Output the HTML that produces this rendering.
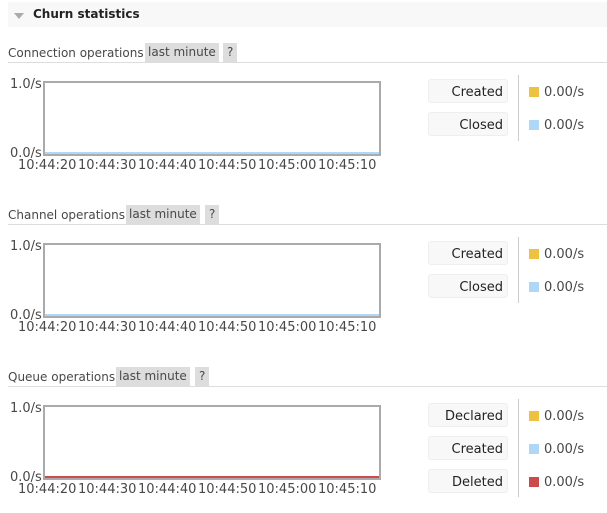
<!DOCTYPE html>
<html><head><meta charset="utf-8">
<style>
*{margin:0;padding:0;box-sizing:border-box}
body{width:607px;height:513px;background:#fff;font-family:"DejaVu Sans","Liberation Sans",sans-serif;font-size:12px;color:#484848;position:relative;overflow:hidden}
.a{position:absolute;white-space:nowrap}
.hdr{left:8px;top:2px;width:599px;height:25px;background:#f8f8f8}
.tri{left:14px;top:13px;width:0;height:0;border-left:5px solid transparent;border-right:5px solid transparent;border-top:6px solid #aaa}
.ttl{left:33px;top:7px;font-weight:bold;font-size:12px;color:#222}
.sec{position:absolute;left:0;width:607px;height:160px}
.lbl{left:8px;top:2px;line-height:18px;color:#484848}
.tag{top:1px;height:19px;line-height:19px;background:#ddd;padding:0 3px;color:#484848}
.hr{left:8px;top:20px;width:599px;height:1px;background:#ddd}
.chart{left:43px;top:39px;width:338px;height:75px;border:2px solid #aaa;background:#fff}
.ser{position:absolute;left:0;bottom:0;width:100%;height:2px}
.y{left:10px;font-size:13px}
.x{top:116px;font-size:13px;width:60px;text-align:left}
.btn{left:428px;width:80px;height:24px;background:#f8f8f8;border:1px solid #eee;border-radius:3px;text-align:right;padding-right:4px;line-height:25px;color:#222;font-size:13px}
.vl{left:518px;width:1px;background:#ccc}
.sw{left:529px;width:10px;height:10px}
.val{left:544px;line-height:14px;color:#484848;font-size:13px}
</style></head><body>
<div class="a hdr"></div><div class="a tri"></div><div class="a ttl">Churn statistics</div>

<div class="sec" style="top:42px">
<div class="a lbl">Connection operations</div>
<div class="a tag" style="left:145px">last minute</div><div class="a tag" style="left:223px;padding:0 4px">?</div>
<div class="a hr"></div>
<div class="a y" style="top:35px">1.0/s</div><div class="a y" style="top:104px">0.0/s</div>
<div class="a chart"><div class="ser" style="background:#afd8f8"></div></div>
<div class="a x" style="left:18px">10:44:20</div><div class="a x" style="left:78px">10:44:30</div><div class="a x" style="left:138px">10:44:40</div><div class="a x" style="left:198px">10:44:50</div><div class="a x" style="left:258px">10:45:00</div><div class="a x" style="left:318px">10:45:10</div>
<div class="a btn" style="top:37px">Created</div><div class="a btn" style="top:70px">Closed</div>
<div class="a vl" style="top:33px;height:66px"></div>
<div class="a sw" style="top:45px;background:#edc240"></div><div class="a val" style="top:44px">0.00/s</div>
<div class="a sw" style="top:78px;background:#afd8f8"></div><div class="a val" style="top:77px">0.00/s</div>
</div>

<div class="sec" style="top:204px">
<div class="a lbl">Channel operations</div>
<div class="a tag" style="left:126px">last minute</div><div class="a tag" style="left:205px;padding:0 4px">?</div>
<div class="a hr"></div>
<div class="a y" style="top:35px">1.0/s</div><div class="a y" style="top:104px">0.0/s</div>
<div class="a chart"><div class="ser" style="background:#afd8f8"></div></div>
<div class="a x" style="left:18px">10:44:20</div><div class="a x" style="left:78px">10:44:30</div><div class="a x" style="left:138px">10:44:40</div><div class="a x" style="left:198px">10:44:50</div><div class="a x" style="left:258px">10:45:00</div><div class="a x" style="left:318px">10:45:10</div>
<div class="a btn" style="top:37px">Created</div><div class="a btn" style="top:70px">Closed</div>
<div class="a vl" style="top:33px;height:66px"></div>
<div class="a sw" style="top:45px;background:#edc240"></div><div class="a val" style="top:44px">0.00/s</div>
<div class="a sw" style="top:78px;background:#afd8f8"></div><div class="a val" style="top:77px">0.00/s</div>
</div>

<div class="sec" style="top:366px;height:147px">
<div class="a lbl">Queue operations</div>
<div class="a tag" style="left:116px">last minute</div><div class="a tag" style="left:195px;padding:0 4px">?</div>
<div class="a hr"></div>
<div class="a y" style="top:35px">1.0/s</div><div class="a y" style="top:104px">0.0/s</div>
<div class="a chart"><div class="ser" style="background:#cb4b4b"></div></div>
<div class="a x" style="left:18px">10:44:20</div><div class="a x" style="left:78px">10:44:30</div><div class="a x" style="left:138px">10:44:40</div><div class="a x" style="left:198px">10:44:50</div><div class="a x" style="left:258px">10:45:00</div><div class="a x" style="left:318px">10:45:10</div>
<div class="a btn" style="top:37px">Declared</div><div class="a btn" style="top:70px">Created</div><div class="a btn" style="top:103px">Deleted</div>
<div class="a vl" style="top:33px;height:98px"></div>
<div class="a sw" style="top:45px;background:#edc240"></div><div class="a val" style="top:44px">0.00/s</div>
<div class="a sw" style="top:78px;background:#afd8f8"></div><div class="a val" style="top:77px">0.00/s</div>
<div class="a sw" style="top:111px;background:#cb4b4b"></div><div class="a val" style="top:110px">0.00/s</div>
</div>
</body></html>
